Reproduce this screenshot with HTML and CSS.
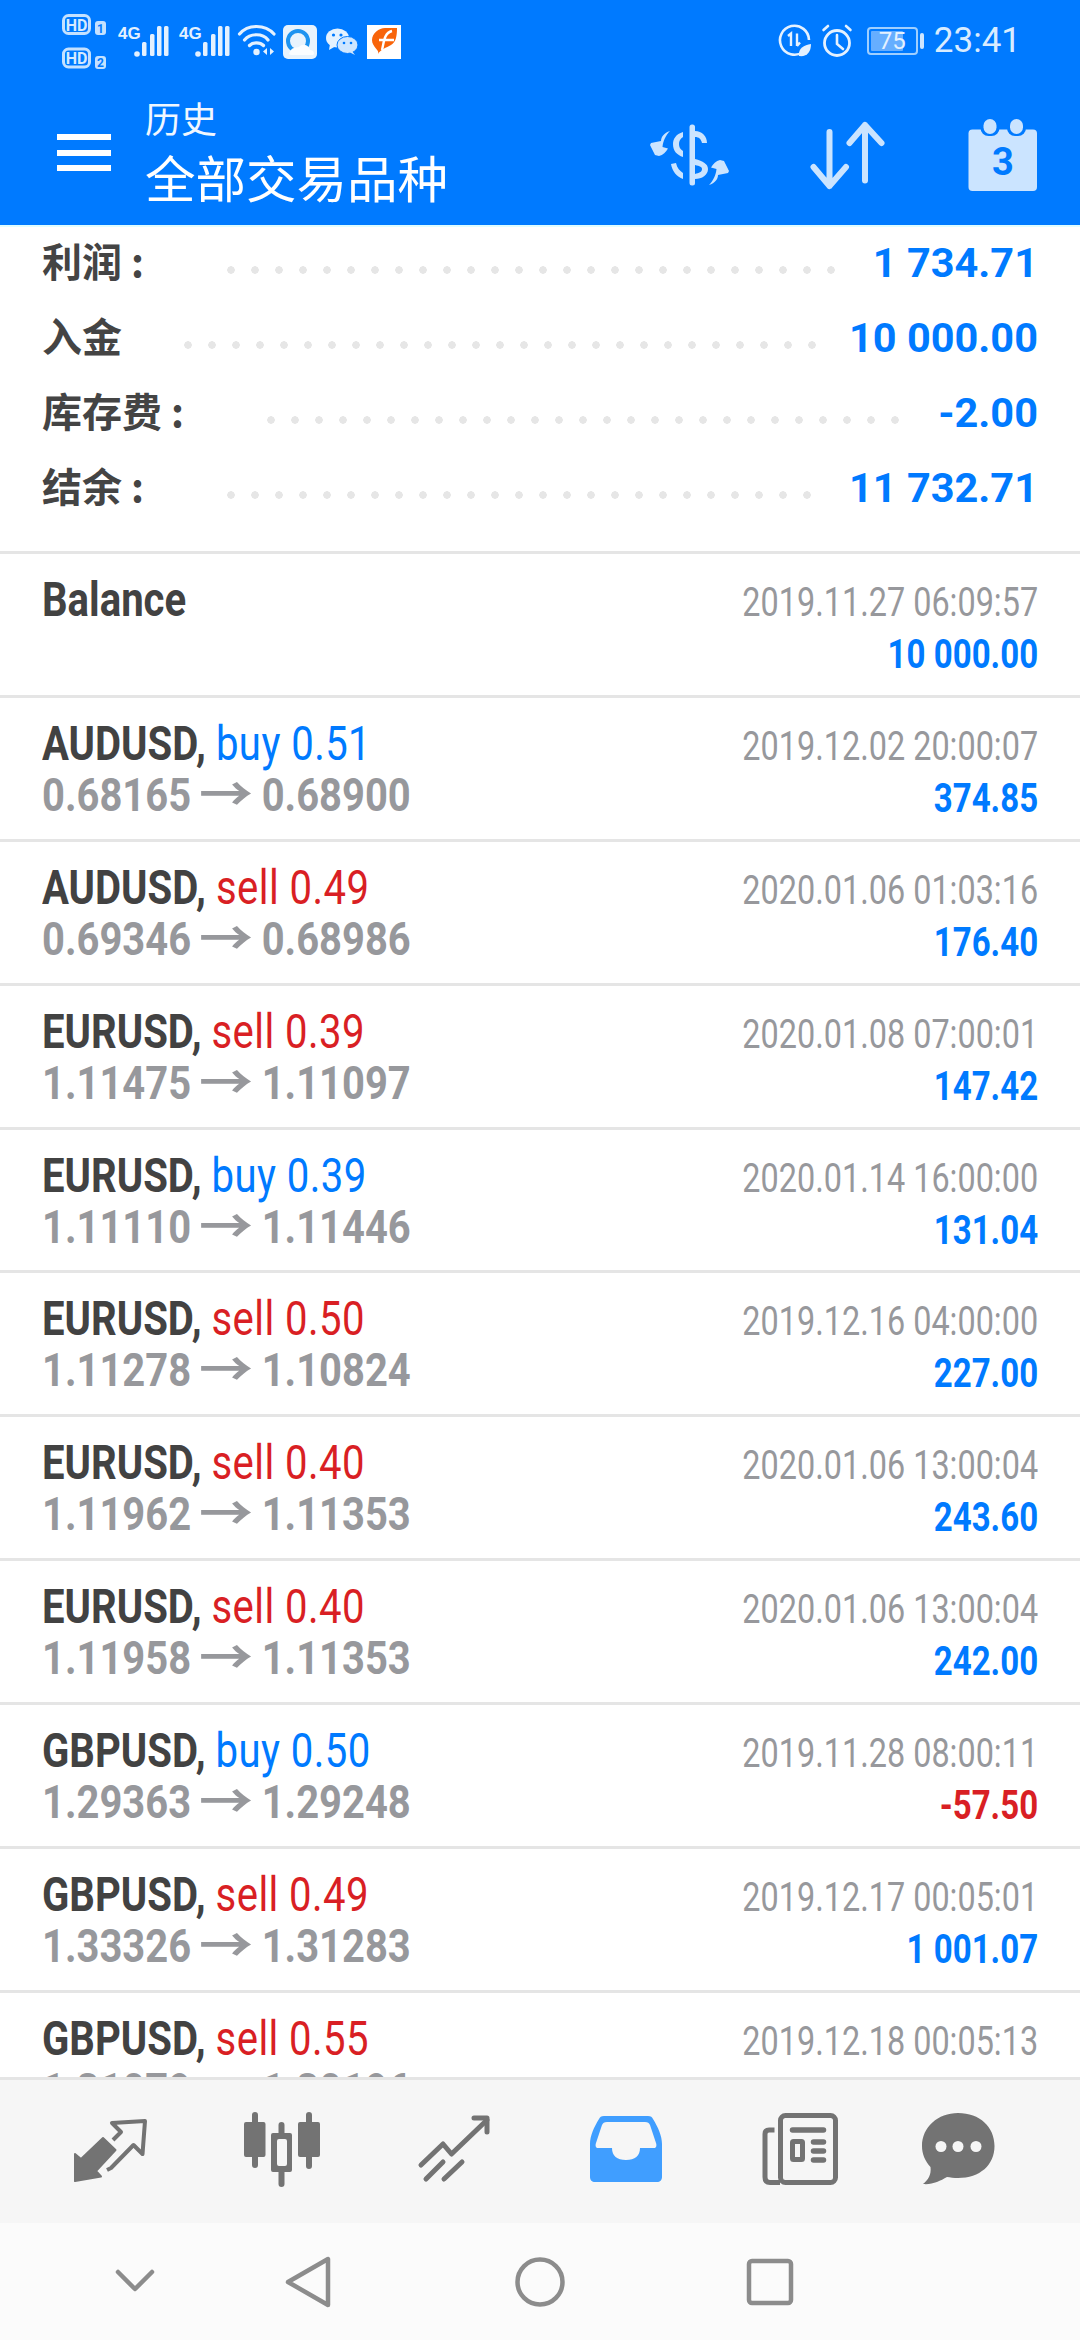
FILE: index.html
```html
<!DOCTYPE html>
<html lang="zh">
<head>
    <meta charset="UTF-8">
    <meta name="viewport" content="width=device-width, initial-scale=1.0">
    <title>历史</title>
    <link rel="stylesheet" href="styles.css">
</head>
<body>
    <header class="top">
        <div class="status">
            <svg class="st-sim" width="46" height="60" viewBox="0 0 46 60">
                <rect x="1.5" y="15.5" width="26" height="18" rx="5" fill="none" stroke="#c4e1ff" stroke-width="3"/>
                <text x="14.5" y="30.500" class="st-hd">HD</text>
                <rect x="33" y="21" width="11" height="14" rx="3" fill="#c4e1ff"/>
                <text x="38.5" y="32.500" class="st-num">1</text>
                <rect x="1.5" y="49" width="26" height="18" rx="5" fill="none" stroke="#c4e1ff" stroke-width="3"/>
                <text x="14.5" y="64" class="st-hd">HD</text>
                <rect x="33" y="56" width="11" height="13" rx="3" fill="#c4e1ff"/>
                <text x="38.5" y="67" class="st-num">2</text>
            </svg>
            <svg class="st-signal" width="55" height="60" viewBox="0 0 55 60">
                <text x="0" y="39" class="st-4g">4G</text>
                <circle cx="19" cy="54" r="2.800" fill="#e4f1ff"/>
                <rect x="24" y="42" width="4.500" height="14" rx="1.500" fill="#e4f1ff"/>
                <rect x="32" y="34" width="4.500" height="22" rx="1.500" fill="#e4f1ff"/>
                <rect x="39" y="26" width="4.500" height="30" rx="1.500" fill="#e4f1ff"/>
                <rect x="46" y="26" width="4.500" height="30" rx="1.500" fill="#e4f1ff"/>
            </svg>
            <svg class="st-signal" width="55" height="60" viewBox="0 0 55 60">
                <text x="0" y="39" class="st-4g">4G</text>
                <circle cx="19" cy="54" r="2.800" fill="#e4f1ff"/>
                <rect x="24" y="42" width="4.500" height="14" rx="1.500" fill="#e4f1ff"/>
                <rect x="32" y="34" width="4.500" height="22" rx="1.500" fill="#e4f1ff"/>
                <rect x="39" y="26" width="4.500" height="30" rx="1.500" fill="#e4f1ff"/>
                <rect x="46" y="26" width="4.500" height="30" rx="1.500" fill="#e4f1ff"/>
            </svg>
            <svg class="st-wifi" width="38" height="60" viewBox="0 0 38 60">
                <g fill="none" stroke="#e4f1ff" stroke-width="3.200" stroke-linecap="round">
                    <path d="M1.500 34 C10 24 27 24 36 34"/>
                    <path d="M6.500 40 C12 33 25 33 30 40"/>
                    <path d="M11.500 45.500 C15 42 22 42 25.500 45.500"/>
                </g>
                <circle cx="18.500" cy="52" r="3.200" fill="#e4f1ff"/>
                <path d="M29 48 L29 55 L25 51.500Z M32 48 L32 55 L36 51.500Z" fill="#e4f1ff"/>
            </svg>
            <svg class="st-app" width="34" height="60" viewBox="0 0 34 60">
                <rect y="25" width="34" height="34" rx="5" fill="#e8f3fd"/>
                <circle cx="15" cy="41" r="10" fill="#e8f3fd" stroke="#1d93f0" stroke-width="4"/>
                <path d="M6 54 C8 46 14 48 16 47 C20 42 27 46 27 50 C31 50 32 54 30 55 L8 55Z" fill="#fbfdff"/>
            </svg>
            <svg class="st-app st-wechat" width="32" height="60" viewBox="0 0 32 60">
                <ellipse cx="11.500" cy="38" rx="11.500" ry="9.500" fill="#e5f2ff"/>
                <path d="M4 44 L3 50 L10 46Z" fill="#e5f2ff"/>
                <ellipse cx="21.500" cy="45" rx="10.500" ry="8.500" fill="#cfe6ff" stroke="#007aff" stroke-width="1"/>
                <path d="M26 51 L29 55 L24 52.500Z" fill="#cfe6ff"/>
                <circle cx="7.500" cy="35" r="1.600" fill="#007aff"/>
                <circle cx="15" cy="35" r="1.600" fill="#007aff"/>
                <circle cx="18" cy="43" r="1.300" fill="#007aff"/>
                <circle cx="25" cy="43" r="1.300" fill="#007aff"/>
            </svg>
            <svg class="st-app st-fapp" width="34" height="60" viewBox="0 0 34 60">
                <rect y="25" width="34" height="34" fill="#fff"/>
                <path d="M11 54 C13 50 5 47 5 40 C5 33 12 28 18 28 L30 28 C30 36 29 42 24 45 C19 48 14 49 11 54Z" fill="#f8640a"/>
                <path d="M12 40 L27 40 M15 50 C17 42 17 33 25 31" fill="none" stroke="#fff" stroke-width="2.400"/>
            </svg>
            <div class="status-right">
                <svg width="32" height="60" viewBox="0 0 32 60">
                    <path d="M24 52 A14.500 14.500 0 1 1 30 40" fill="none" stroke="#e4f1ff" stroke-width="2.600"/>
                    <path d="M9 36 L12 33.500 L12 46 M18 33.500 L18 46 M18 46 L21 42.500" fill="none" stroke="#e4f1ff" stroke-width="2.400"/>
                    <path d="M20 56 C19 48 25 45 32 44 C32 52 28 57 20 56Z" fill="#e4f1ff"/>
                </svg>
                <svg class="st-alarm" width="30" height="60" viewBox="0 0 30 60">
                    <circle cx="15" cy="43" r="12.500" fill="none" stroke="#e4f1ff" stroke-width="2.800"/>
                    <path d="M15 35 L15 44 L21 49 M1.500 30 L6 26 M28.500 30 L24 26" fill="none" stroke="#e4f1ff" stroke-width="2.600" stroke-linecap="round"/>
                </svg>
                <div class="battery"><span class="battery-fill"></span><span class="battery-num">75</span></div>
                <span class="battery-tip"></span>
                <span class="clock">23:41</span>
            </div>
        </div>
        <div class="toolbar">
            <div class="burger"><span></span><span></span><span></span></div>
            <div class="titles">
                <div class="title-sm">历史</div>
                <div class="title-lg">全部交易品种</div>
            </div>
            <div class="actions">
                <svg width="80" height="80" viewBox="0 0 80 80" fill="#cbe4ff">
                    <rect x="40.500" y="9.500" width="5.500" height="61" rx="2.500"/>
                    <path d="M46 16 C53 16 58 21 58 28 L53 28 C52 24 50 22 46 22Z"/>
                    <path d="M34 17 C27 19 24 24 24 29 C24 36 28 40 34 42 L34 36 C31 34 30 32 30 29 C30 26 31 24 34 22Z"/>
                    <path d="M22 49 L27 48 C28 53 31 56 34 58 L34 64 C28 62 23 56 22 49Z"/>
                    <path fill-rule="evenodd" d="M46 44 C54 46 59 49 59 54 C59 60 53 64 46 64Z M46 50 L46 59 C50 58 53 57 53 54 C53 52 51 51 46 50Z"/>
                    <path d="M21 16 C15 18 12 22 12 26 L2 28 L1 30 L6 40 L10 41 C14 40 17 37 19 33.500 L13.500 32 C14 26 17 20 21 16Z"/>
                    <path d="M60 70 C66 68 69 64 69 60 L79 58 L80 56 L75 46 L71 45 C67 46 64 49 62 52.500 L67.500 54 C67 60 64 66 60 70Z"/>
                </svg>
                <svg class="act-sort" width="80" height="80" viewBox="0 0 80 80" fill="none" stroke="#cbe4ff" stroke-width="6" stroke-linecap="round" stroke-linejoin="round">
                    <path d="M21.500 17 L21.500 71 M5.500 52 L21.500 71 L38 52"/>
                    <path d="M57 10 L57 65.500 M41.500 28 L57 10 L73.500 28"/>
                </svg>
                <svg width="80" height="80" viewBox="0 0 80 80">
                    <rect x="5.500" y="14.500" width="68.500" height="61.500" rx="4" fill="#cbe4ff"/>
                    <rect x="17.500" y="3" width="19" height="18" rx="8" fill="#007aff"/>
                    <rect x="44" y="3" width="19" height="18" rx="8" fill="#007aff"/>
                    <rect x="20.500" y="4" width="13" height="15" rx="6.500" fill="#cbe4ff"/>
                    <rect x="47" y="4" width="13" height="15" rx="6.500" fill="#cbe4ff"/>
                    <text x="39.800" y="59.500" class="cal-num">3</text>
                </svg>
            </div>
        </div>
    </header>

    <main class="list">
        <section class="summary">
            <div class="sum-row"><span class="sum-label">利润 :</span><span class="leader"></span><span class="sum-value">1 734.71</span></div>
            <div class="sum-row"><span class="sum-label sum-plain">入金</span><span class="leader"></span><span class="sum-value">10 000.00</span></div>
            <div class="sum-row"><span class="sum-label">库存费 :</span><span class="leader"></span><span class="sum-value">-2.00</span></div>
            <div class="sum-row"><span class="sum-label">结余 :</span><span class="leader"></span><span class="sum-value">11 732.71</span></div>
        </section>

        <div class="deal">
            <div class="deal-left"><div class="deal-name">Balance</div></div>
            <div class="deal-right"><div class="deal-time">2019.11.27 06:09:57</div><div class="deal-profit">10 000.00</div></div>
        </div>
        <div class="deal">
            <div class="deal-left"><div class="deal-name">AUDUSD, <span class="buy">buy 0.51</span></div><div class="deal-price">0.68165 <span class="arrow">→</span> 0.68900</div></div>
            <div class="deal-right"><div class="deal-time">2019.12.02 20:00:07</div><div class="deal-profit">374.85</div></div>
        </div>
        <div class="deal">
            <div class="deal-left"><div class="deal-name">AUDUSD, <span class="sell">sell 0.49</span></div><div class="deal-price">0.69346 <span class="arrow">→</span> 0.68986</div></div>
            <div class="deal-right"><div class="deal-time">2020.01.06 01:03:16</div><div class="deal-profit">176.40</div></div>
        </div>
        <div class="deal">
            <div class="deal-left"><div class="deal-name">EURUSD, <span class="sell">sell 0.39</span></div><div class="deal-price">1.11475 <span class="arrow">→</span> 1.11097</div></div>
            <div class="deal-right"><div class="deal-time">2020.01.08 07:00:01</div><div class="deal-profit">147.42</div></div>
        </div>
        <div class="deal">
            <div class="deal-left"><div class="deal-name">EURUSD, <span class="buy">buy 0.39</span></div><div class="deal-price">1.11110 <span class="arrow">→</span> 1.11446</div></div>
            <div class="deal-right"><div class="deal-time">2020.01.14 16:00:00</div><div class="deal-profit">131.04</div></div>
        </div>
        <div class="deal">
            <div class="deal-left"><div class="deal-name">EURUSD, <span class="sell">sell 0.50</span></div><div class="deal-price">1.11278 <span class="arrow">→</span> 1.10824</div></div>
            <div class="deal-right"><div class="deal-time">2019.12.16 04:00:00</div><div class="deal-profit">227.00</div></div>
        </div>
        <div class="deal">
            <div class="deal-left"><div class="deal-name">EURUSD, <span class="sell">sell 0.40</span></div><div class="deal-price">1.11962 <span class="arrow">→</span> 1.11353</div></div>
            <div class="deal-right"><div class="deal-time">2020.01.06 13:00:04</div><div class="deal-profit">243.60</div></div>
        </div>
        <div class="deal">
            <div class="deal-left"><div class="deal-name">EURUSD, <span class="sell">sell 0.40</span></div><div class="deal-price">1.11958 <span class="arrow">→</span> 1.11353</div></div>
            <div class="deal-right"><div class="deal-time">2020.01.06 13:00:04</div><div class="deal-profit">242.00</div></div>
        </div>
        <div class="deal">
            <div class="deal-left"><div class="deal-name">GBPUSD, <span class="buy">buy 0.50</span></div><div class="deal-price">1.29363 <span class="arrow">→</span> 1.29248</div></div>
            <div class="deal-right"><div class="deal-time">2019.11.28 08:00:11</div><div class="deal-profit loss">-57.50</div></div>
        </div>
        <div class="deal">
            <div class="deal-left"><div class="deal-name">GBPUSD, <span class="sell">sell 0.49</span></div><div class="deal-price">1.33326 <span class="arrow">→</span> 1.31283</div></div>
            <div class="deal-right"><div class="deal-time">2019.12.17 00:05:01</div><div class="deal-profit">1 001.07</div></div>
        </div>
        <div class="deal">
            <div class="deal-left"><div class="deal-name">GBPUSD, <span class="sell">sell 0.55</span></div><div class="deal-price">1.31079 <span class="arrow">→</span> 1.30196</div></div>
            <div class="deal-right"><div class="deal-time">2019.12.18 00:05:13</div></div>
        </div>
    </main>

    <nav class="tabs">
        <svg width="80" height="80" viewBox="0 0 80 80">
            <path d="M43 30 L51 22 L42 13 L75 11 L72.500 44 L63.500 35 L41 58 L37 60" fill="none" stroke="#737373" stroke-width="4" stroke-linejoin="round"/>
            <path d="M5 71 L5 44 L11 49 L33 28 L45.500 40 L26 61 L31 66.500Z" fill="#737373" stroke="#737373" stroke-width="2" stroke-linejoin="round"/>
        </svg>
        <svg width="80" height="80" viewBox="0 0 80 80" fill="#737373">
            <path d="M10 5 A3 3 0 0 1 16 5 L16 12 L21.500 12 A2 2 0 0 1 23.500 14 L23.500 45 A2 2 0 0 1 21.500 47 L16 47 L16 55 A3 3 0 0 1 10 55 L10 47 L4 47 A2 2 0 0 1 2 45 L2 14 A2 2 0 0 1 4 12 L10 12Z"/>
            <path d="M64 5 A3 3 0 0 1 70 5 L70 12 L76 12 A2 2 0 0 1 78 14 L78 45 A2 2 0 0 1 76 47 L70 47 L70 56 A3 3 0 0 1 64 56 L64 47 L58 47 A2 2 0 0 1 56 45 L56 14 A2 2 0 0 1 58 12 L64 12Z"/>
            <path fill-rule="evenodd" d="M36.500 15 A3 3 0 0 1 42.500 15 L42.500 23 L48 23 A2 2 0 0 1 50 25 L50 60 A2 2 0 0 1 48 62 L42.500 62 L42.500 74 A3 3 0 0 1 36.500 74 L36.500 62 L31 62 A2 2 0 0 1 29 60 L29 25 A2 2 0 0 1 31 23 L36.500 23Z M37 29 A2 2 0 0 0 35 31 L35 54 A2 2 0 0 0 37 56 L43 56 A2 2 0 0 0 45 54 L45 31 A2 2 0 0 0 43 29Z"/>
        </svg>
        <svg width="80" height="80" viewBox="0 0 80 80" fill="none" stroke="#737373" stroke-width="5" stroke-linecap="round" stroke-linejoin="round">
            <path d="M7 55 L29 34 L37.500 44 L73 10"/>
            <path d="M60 8 L73 8 L73 22"/>
            <path d="M29 52 L12 69 M48 52 L30 69"/>
        </svg>
        <svg width="80" height="80" viewBox="0 0 80 80">
            <path fill="#409eff" fill-rule="evenodd" d="M18 6 L62 6 C65 6 66 7 67 9 C72 17 76 26 76 34 L76 67 C76 70 74 72 71 72 L9 72 C6 72 4 70 4 67 L4 34 C4 26 8 17 13 9 C14 7 15 6 18 6Z M21 12 C18 12 17 13 16 15 L10 33 C9 36 10 38 12 38 L26 38 C26 46 31 50 40 50 C49 50 54 46 54 38 L68 38 C70 38 71 36 70 33 L64 15 C63 13 62 12 59 12Z"/>
        </svg>
        <svg width="80" height="80" viewBox="0 0 80 80" fill="none" stroke="#737373" stroke-width="5">
            <path d="M16.500 20 L11 20 Q7 20 7 24 L7 67 Q7 72.500 12 72.500 L22 72.500"/>
            <rect x="22.500" y="5.500" width="55" height="67" rx="5"/>
            <path d="M34.500 20 L65.500 20 M55.500 32 L65.500 32 M55.500 41 L65.500 41 M55.500 50 L65.500 50" stroke-width="5.500" stroke-linecap="round"/>
            <rect x="34.500" y="31.500" width="10" height="18" rx="1"/>
        </svg>
        <svg class="tab-chat" width="80" height="80" viewBox="0 0 80 80">
            <path fill="#737373" d="M40 3 C62 3 76.500 17 76.500 36 C76.500 55 62 68 40 68 C36 68 32 67.500 29 67 C22 71 14 75 5 74 C10 70 13.500 65 12.500 57 C7 51 4 44 4 36 C4 17 20 3 40 3Z"/>
            <circle cx="23" cy="36.500" r="5.500" fill="#f6f6f6"/>
            <circle cx="40" cy="36.500" r="5.500" fill="#f6f6f6"/>
            <circle cx="58" cy="36.500" r="5.500" fill="#f6f6f6"/>
        </svg>
    </nav>

    <div class="softkeys">
        <svg class="key-down" width="60" height="60" viewBox="0 0 60 60"><path d="M13 20 L30 37 L47 20" fill="none" stroke="#8c8c8c" stroke-width="4.500" stroke-linecap="round" stroke-linejoin="round"/></svg>
        <svg class="key-back" width="60" height="60" viewBox="0 0 60 60"><path d="M9 30 L49 7 L49 53Z" fill="none" stroke="#8c8c8c" stroke-width="4.500" stroke-linejoin="round"/></svg>
        <svg class="key-home" width="60" height="60" viewBox="0 0 60 60"><circle cx="30" cy="30" r="22.500" fill="none" stroke="#8c8c8c" stroke-width="4.500"/></svg>
        <svg class="key-apps" width="60" height="60" viewBox="0 0 60 60"><rect x="9" y="9" width="42" height="42" rx="3" fill="none" stroke="#8c8c8c" stroke-width="4.500"/></svg>
    </div>
</body>
</html>
```

FILE: styles.css
```css
* {
    box-sizing: border-box;
}
html, body {
    margin: 0;
    padding: 0;
}
body {
    width: 1080px;
    height: 2340px;
    overflow: hidden;
    display: flex;
    flex-direction: column;
    background-color: #fff;
    font-family: Roboto, "Noto Sans CJK SC", sans-serif;
}
svg {
    display: block;
    flex: none;
    overflow: visible;
}

/* status bar + title */
.top {
    height: 225px;
    background-color: #007aff;
    flex: none;
}
.status {
    height: 60px;
    display: flex;
    padding-left: 62px;
    overflow: visible;
}
.st-signal {
    margin-left: 10px;
}
.st-signal + .st-signal {
    margin-left: 6px;
}
.st-wifi {
    margin-left: 4px;
}
.st-app {
    margin-left: 7px;
}
.st-wechat {
    margin-left: 9px;
}
.st-fapp {
    margin-left: 9px;
}
.st-hd {
    font: 700 16px Roboto, sans-serif;
    fill: #d6eaff;
    text-anchor: middle;
}
.st-num {
    font: 700 12px Roboto, sans-serif;
    fill: #007aff;
    text-anchor: middle;
}
.st-4g {
    font: 700 17px "Liberation Sans", sans-serif;
    fill: #e4f1ff;
}
.status-right {
    margin-left: auto;
    padding-right: 59px;
    display: flex;
    align-items: flex-start;
}
.st-alarm {
    margin-left: 11px;
}
.battery {
    position: relative;
    width: 51px;
    height: 28px;
    margin: 27px 0 0 15px;
    border: 2px solid #9fcfff;
    border-radius: 4px;
    padding: 2px;
}
.battery-fill {
    display: block;
    width: 75%;
    height: 100%;
    background-color: #66aeff;
    border-radius: 1px;
}
.battery-num {
    position: absolute;
    left: 0;
    right: 0;
    top: -3px;
    text-align: center;
    font-size: 24px;
    line-height: 30px;
    color: #e4f1ff;
}
.battery-tip {
    width: 4px;
    height: 16px;
    margin: 33px 0 0 2px;
    background-color: #cfe6ff;
    border-radius: 2px;
}
.clock {
    margin: 20px 0 0 10px;
    font-size: 35px;
    line-height: 42px;
    color: #d8ecff;
}

.toolbar {
    height: 165px;
    display: flex;
    align-items: center;
    padding-left: 57px;
}
.burger {
    width: 54px;
    margin-top: 11px;
}
.burger span {
    display: block;
    height: 6px;
    margin-top: 9.5px;
    background-color: #fff;
}
.titles {
    margin-left: 34px;
    padding-top: 18px;
    color: #fff;
    font-family: "Noto Sans CJK SC", sans-serif;
}
.title-sm {
    font-size: 36px;
    line-height: 46px;
    color: #f0f7ff;
}
.title-lg {
    font-size: 50.5px;
    line-height: 68px;
    margin-top: 2px;
}
.actions {
    margin-left: auto;
    margin-top: 25px;
    display: flex;
    gap: 77px;
    padding-right: 37px;
}
.act-sort {
    margin: 0 -2px 0 2px;
}
.cal-num {
    font: 700 38px Roboto, sans-serif;
    fill: #007aff;
    text-anchor: middle;
}

/* list */
.list {
    flex: 1;
    min-height: 0;
    overflow: hidden;
    border-top: 2px solid #e0fdff;
}
.summary {
    height: 324px;
}
.sum-row {
    height: 75px;
    display: flex;
    align-items: center;
    padding: 0 42px;
}
.sum-label {
    font-family: "Noto Sans CJK SC", sans-serif;
    font-weight: 700;
    font-size: 40px;
    line-height: 50px;
    color: #444;
    margin-top: -9px;
}
.leader {
    flex: 1;
    height: 8px;
    margin: 11px 26px 0 83px;
    background: radial-gradient(circle at 4px 4px, #e6e6e6 3.5px, transparent 4px) 0 0 / 24px 8px repeat-x;
}
.sum-plain + .leader {
    margin-left: 62px;
}
.sum-value {
    font-weight: 700;
    font-size: 41.5px;
    line-height: 50px;
    color: #007aff;
    margin-top: -4px;
}

.deal {
    height: 143.9px;
    border-top: 3px solid #e5e5e5;
    display: flex;
    justify-content: space-between;
    padding: 0 42px;
}
.deal-left {
    transform: scaleX(0.85);
    transform-origin: left top;
    white-space: nowrap;
    padding-top: 20px;
}
.deal-name {
    font-weight: 700;
    font-size: 47.2px;
    line-height: 52px;
    color: #424242;
}
.buy {
    font-weight: 400;
    color: #007aff;
    letter-spacing: 0.5px;
}
.sell {
    font-weight: 400;
    color: #d91f24;
    letter-spacing: 0.5px;
}
.deal-price {
    font-weight: 700;
    font-size: 47px;
    line-height: 52px;
    color: #97989c;
    margin-top: -1px;
}
.arrow {
    display: inline-block;
    margin: 0 6.3px;
    transform: scaleX(1.35);
}
.deal-right {
    transform: scaleX(0.81);
    transform-origin: right top;
    text-align: right;
    white-space: nowrap;
    padding-top: 26px;
}
.deal-time {
    font-size: 40px;
    line-height: 46px;
    color: #97989c;
}
.deal-profit {
    font-weight: 700;
    font-size: 40.8px;
    line-height: 46px;
    margin-top: 5px;
    color: #007aff;
}
.loss {
    color: #d91f24;
}

/* bottom */
.tabs {
    height: 146px;
    flex: none;
    display: flex;
    gap: 92px;
    padding: 30px 0 0 70px;
    background-color: #f6f6f6;
    border-top: 3px solid #e5e5e5;
}
.tab-chat {
    margin-left: -12px;
}
.softkeys {
    height: 117px;
    flex: none;
    display: flex;
    align-items: center;
    padding-left: 105px;
    background-color: #fbfbfb;
}
.key-back {
    margin-left: 114px;
}
.key-home {
    margin-left: 171px;
}
.key-apps {
    margin-left: 170px;
}
```
